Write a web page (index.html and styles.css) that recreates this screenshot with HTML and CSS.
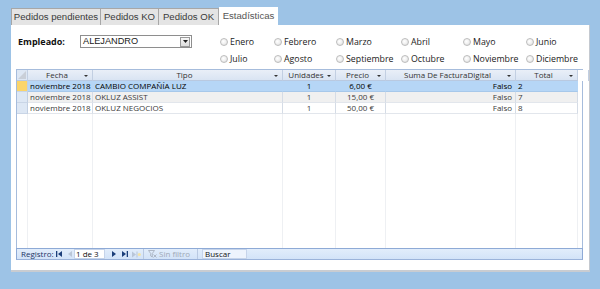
FILE: index.html
```html
<!DOCTYPE html>
<html lang="es">
<head>
<meta charset="utf-8">
<title>Estadísticas</title>
<link rel="stylesheet" href="styles.css">
</head>
<body>
<div class="app">
  <div class="tabs">
    <div class="tab t1">Pedidos pendientes</div>
    <div class="tab t2">Pedidos KO</div>
    <div class="tab t3">Pedidos OK</div>
    <div class="tab active t4">Estadísticas</div>
  </div>
  <div class="panel">
    <div class="filters">
      <div class="emp">
        <span class="emp-label">Empleado:</span>
        <div class="select">
          <span class="sel-value">ALEJANDRO</span>
          <span class="sel-btn"><svg width="5" height="3" viewBox="0 0 5 3"><path d="M0 0H5L2.5 3Z" fill="#222"/></svg></span>
        </div>
      </div>
      <div class="months">
        <label class="m"><span class="radio"></span>Enero</label>
        <label class="m"><span class="radio"></span>Febrero</label>
        <label class="m"><span class="radio"></span>Marzo</label>
        <label class="m"><span class="radio"></span>Abril</label>
        <label class="m"><span class="radio"></span>Mayo</label>
        <label class="m"><span class="radio"></span>Junio</label>
        <label class="m"><span class="radio"></span>Julio</label>
        <label class="m"><span class="radio"></span>Agosto</label>
        <label class="m"><span class="radio"></span>Septiembre</label>
        <label class="m"><span class="radio"></span>Octubre</label>
        <label class="m"><span class="radio"></span>Noviembre</label>
        <label class="m"><span class="radio"></span>Diciembre</label>
      </div>
    </div>

    <div class="grid">
      <div class="row head">
        <div class="cell sel corner"><svg width="8" height="8" viewBox="0 0 8 8"><path d="M8 0V8H0Z" fill="#c9cfd8"/></svg></div>
        <div class="cell hc">Fecha<i class="dd"></i></div>
        <div class="cell hc">Tipo<i class="dd"></i></div>
        <div class="cell hc">Unidades<i class="dd"></i></div>
        <div class="cell hc">Precio<i class="dd"></i></div>
        <div class="cell hc">Suma De FacturaDigital<i class="dd"></i></div>
        <div class="cell hc">Total<i class="dd"></i></div>
        <div class="cell gut"></div>
      </div>
      <div class="row r1 current">
        <div class="cell sel cur"></div>
        <div class="cell">noviembre 2018</div>
        <div class="cell">CAMBIO COMPAÑÍA LUZ</div>
        <div class="cell ctr">1</div>
        <div class="cell ctr">6,00 €</div>
        <div class="cell rgt">Falso</div>
        <div class="cell">2</div>
        <div class="cell gut"></div>
      </div>
      <div class="row r2 alt">
        <div class="cell sel"></div>
        <div class="cell">noviembre 2018</div>
        <div class="cell">OKLUZ ASSIST</div>
        <div class="cell ctr">1</div>
        <div class="cell ctr">15,00 €</div>
        <div class="cell rgt">Falso</div>
        <div class="cell">7</div>
        <div class="cell gut"></div>
      </div>
      <div class="row r3">
        <div class="cell sel"></div>
        <div class="cell">noviembre 2018</div>
        <div class="cell">OKLUZ NEGOCIOS</div>
        <div class="cell ctr">1</div>
        <div class="cell ctr">50,00 €</div>
        <div class="cell rgt">Falso</div>
        <div class="cell">8</div>
        <div class="cell gut"></div>
      </div>
      <div class="row filler">
        <div class="cell sel blank"></div>
        <div class="cell"></div>
        <div class="cell"></div>
        <div class="cell"></div>
        <div class="cell"></div>
        <div class="cell"></div>
        <div class="cell"></div>
        <div class="cell gut"></div>
      </div>
      <div class="nav">
        <span class="nav-label">Registro:</span>
        <span class="ico first"><svg width="6" height="6" viewBox="0 0 6 6"><rect x="0" y="0" width="1.3" height="6" fill="#1c3f7a"/><path d="M6 0V6L2 3Z" fill="#1c3f7a"/></svg></span>
        <span class="ico prev"><svg width="4" height="6" viewBox="0 0 4 6"><path d="M4 0V6L0 3Z" fill="#b9c6d8"/></svg></span>
        <span class="recbox">1 de 3</span>
        <span class="ico next"><svg width="4" height="6" viewBox="0 0 4 6"><path d="M0 0V6L4 3Z" fill="#1c3f7a"/></svg></span>
        <span class="ico last"><svg width="6" height="6" viewBox="0 0 6 6"><path d="M0 0V6L4 3Z" fill="#1c3f7a"/><rect x="4.7" y="0" width="1.3" height="6" fill="#1c3f7a"/></svg></span>
        <span class="ico newrec"><svg width="9" height="7" viewBox="0 0 9 7"><path d="M0 0.5V6.5L4 3.5Z" fill="#b9c6d8"/><rect x="4.5" y="0.5" width="1" height="6" fill="#b9c6d8"/><circle cx="7.3" cy="3.5" r="1.6" fill="#f3e3a6"/></svg></span>
        <span class="sep"></span>
        <span class="filter"><svg width="9" height="8" viewBox="0 0 9 8"><path d="M0.5 0.5H6.5L4.3 3.5V7L2.7 6V3.5Z" fill="none" stroke="#a9b2bf" stroke-width="0.9"/><path d="M5.5 4.5L8.5 7.5M8.5 4.5L5.5 7.5" stroke="#a9b2bf" stroke-width="0.9"/></svg>Sin filtro</span>
        <span class="search">Buscar</span>
      </div>
    </div>
  </div>
</div>
</body>
</html>
```

FILE: styles.css
```css
* { box-sizing: border-box; }

html, body {
  margin: 0;
  padding: 0;
}

body {
  width: 600px;
  height: 289px;
  background: #9dc3e6;
  font-family: "Open Sans", "Liberation Sans", sans-serif;
  overflow: hidden;
}

.app {
  padding: 7px 0 0 11px;
}

/* ---------- tabs ---------- */
.tabs {
  display: flex;
  align-items: flex-end;
  height: 18px;
}

.tab {
  height: 17px;
  border: 1px solid #a7a7a7;
  border-bottom: none;
  border-left: none;
  background: #e4e4e4;
  color: #3a3a3a;
  font-family: "Liberation Sans", Arial, sans-serif;
  font-size: 9.6px;
  line-height: 16px;
  text-align: center;
  white-space: nowrap;
}

.tab.t1 { width: 90px; border-left: 1px solid #a7a7a7; }
.tab.t2 { width: 58px; }
.tab.t3 { width: 60px; }
.tab.t4 { width: 59px; }

.tab.active {
  height: 18px;
  background: #ffffff;
  border: none;
  color: #555;
  line-height: 18px;
}

/* ---------- panel ---------- */
.panel {
  width: 579px;
  height: 247px;
  background: #ffffff;
  border-right: 1px solid #c4c9d0;
  border-bottom: 2px solid #c9ccd1;
  display: flex;
  flex-direction: column;
}

.filters {
  display: flex;
  padding: 8px 0 0 7px;
  height: 34px;
}

.emp {
  display: flex;
  align-items: flex-start;
  padding-top: 2px;
  width: 202px;
}

.emp-label {
  width: 62px;
  font-weight: 700;
  font-size: 9px;
  line-height: 13px;
  color: #111;
}

.select {
  width: 112px;
  height: 13px;
  border: 1px solid #8e8e8e;
  display: flex;
  align-items: center;
  justify-content: space-between;
  padding-left: 2px;
  background: #fff;
}

.sel-value {
  font-family: "Liberation Sans", Arial, sans-serif;
  font-size: 9.2px;
  color: #1a1a1a;
  line-height: 11px;
}

.sel-btn {
  width: 10px;
  height: 10px;
  margin-right: 1px;
  border: 1px solid #9a9a9a;
  background: linear-gradient(#f7f7f7, #dedede);
  display: flex;
  align-items: center;
  justify-content: center;
}

.months {
  display: grid;
  grid-template-columns: 54px 62px 65px 62px 63px 52px;
  grid-auto-rows: 17px;
}

.m {
  display: flex;
  align-items: center;
  gap: 2px;
  font-size: 8.8px;
  color: #222;
  white-space: nowrap;
}

.radio {
  width: 8px;
  height: 8px;
  border-radius: 50%;
  border: 1px solid #bdbdbd;
  background: radial-gradient(circle at 40% 40%, #ffffff 0%, #f1f1f1 45%, #d7d7d7 100%);
  flex: none;
}

/* ---------- datasheet ---------- */
.grid {
  margin: 10px 0 0 5px;
  width: 567px;
  height: 191px;
  border: 1px solid #a6bcdc;
  border-bottom: none;
  display: flex;
  flex-direction: column;
  background: #fff;
}

.row {
  display: grid;
  grid-template-columns: 11px 65px 190px 53px 50px 130px 62px 4px;
  height: 11px;
  font-size: 8px;
  line-height: 10px;
  color: #3a3a3a;
}

.cell {
  border-right: 1px solid #d5dce6;
  border-bottom: 1px solid #e2e6ec;
  padding: 0 2px;
  white-space: nowrap;
  overflow: hidden;
}

.cell.gut { border-right: none; border-bottom: none; }

.ctr { text-align: center; }
.rgt { text-align: right; padding-right: 3px; }

.head {
  background: linear-gradient(#e9eff8, #d8e3f2);
  color: #333;
  height: 11px;
}

.head .cell {
  border-right: 1px solid #c2cfe2;
  border-bottom: 1px solid #b9c9e0;
  position: relative;
  text-align: center;
  padding-right: 8px;
}

.head .cell.sel { padding: 0 1px 1px 0; }

.head .gut { background: #fff; border-bottom: none; }

.corner {
  display: flex;
  align-items: flex-end;
  justify-content: flex-end;
}

.dd {
  position: absolute;
  right: 4px;
  top: 5px;
  width: 0;
  height: 0;
  border-left: 2px solid transparent;
  border-right: 2px solid transparent;
  border-top: 2px solid #333;
}

.sel {
  background: #dde7f4;
  border-right: 1px solid #c2cfe2;
  border-bottom: 1px solid #c9d5e6;
  padding: 0;
}

.sel.cur { background: #fbd56a; }
.sel.blank { background: #fff; border-bottom: none; border-right-color: #dfe5ee; }

.current { color: #000; }
.current .cell:not(.sel):not(.gut) {
  background: #b6d6f6;
  border-right-color: #b6d6f6;
  border-bottom-color: #a7c8ea;
}

.alt .cell:not(.sel):not(.gut) { background: #f0f0f0; }

.filler {
  flex: 1;
  height: auto;
}

.filler .cell {
  border-bottom: none;
  border-right-color: #eef0f3;
}

/* ---------- navigation bar ---------- */
.nav {
  height: 12px;
  margin-left: -1px;
  margin-right: -1px;
  border: 1px solid #8eaad6;
  border-bottom: 1px solid #9bb3da;
  background: linear-gradient(#e2edfb, #d3e3f8);
  display: flex;
  align-items: center;
  font-size: 8px;
  line-height: 10px;
  color: #1c3565;
}

.nav-label { margin-left: 4px; width: 35px; }

.ico {
  display: flex;
  align-items: center;
}

.ico.first { width: 12px; }
.ico.prev { width: 6px; }

.recbox {
  width: 31px;
  height: 10px;
  background: #fff;
  border: 1px solid #c6d4ea;
  padding-left: 1px;
  color: #111;
  margin-right: 7px;
  line-height: 8px;
}

.ico.next { width: 10px; }
.ico.last { width: 10px; }
.ico.newrec { width: 11px; }

.sep {
  width: 1px;
  height: 10px;
  background: #b9c9e2;
  margin-right: 4px;
}

.filter {
  display: flex;
  align-items: center;
  gap: 2px;
  color: #a0a9b6;
  width: 50px;
  height: 10px;
  border-right: 1px solid #b9c9e2;
  margin-right: 4px;
}

.search {
  width: 45px;
  height: 10px;
  background: #eef4fd;
  border: 1px solid #c6d4ea;
  padding-left: 2px;
  line-height: 8px;
  color: #111;
}
```
